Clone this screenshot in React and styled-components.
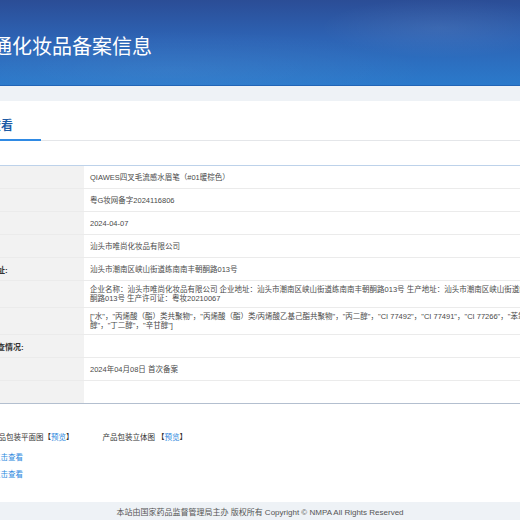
import React from 'react';
import styled, { createGlobalStyle } from 'styled-components';

const Global = createGlobalStyle`
  html, body {
    margin: 0;
    padding: 0;
    overflow: hidden;
  }
  body {
    font-family: "Liberation Sans", "Noto Sans CJK SC", sans-serif;
    background: #eef2f6;
  }
  * {
    box-sizing: border-box;
  }
`;

const Viewport = styled.div`
  width: 520px;
  height: 520px;
  overflow: hidden;
  display: flex;
  flex-direction: column;
  background: #eef2f6;
`;

const Banner = styled.header`
  height: 86px;
  flex-shrink: 0;
  border-bottom: 1px solid #2265b6;
  background:
    radial-gradient(ellipse 120px 30px at 440px 28px, rgba(255, 255, 255, 0.07), transparent),
    radial-gradient(ellipse 260px 40px at 170px 70px, rgba(255, 255, 255, 0.05), transparent),
    linear-gradient(180deg, #2b4d96 0%, #2d63b4 45%, #2b7acb 100%);
  overflow: hidden;
`;

const Title = styled.h1`
  margin: 0 0 0 -28px;
  padding-top: 33px;
  font-family: "Noto Sans CJK SC", sans-serif;
  font-size: 20px;
  line-height: 26px;
  font-weight: 400;
  color: #fff;
  white-space: nowrap;
`;

const Strip = styled.div`
  height: 15px;
  flex-shrink: 0;
`;

const Card = styled.main`
  background: #fff;
  height: 401px;
  flex-shrink: 0;
  overflow: hidden;
`;

const Inner = styled.div`
  margin-left: -40px;
  width: 900px;
`;

const TabBar = styled.div`
  padding-top: 17px;
  border-bottom: 1px solid #e4e6e9;
  display: flex;
`;

const Tab = styled.div`
  margin-left: 5px;
  padding: 0 28px 7px 0;
  border-bottom: 2px solid #2f8ae4;
  font-family: "Noto Sans CJK SC", sans-serif;
  font-size: 12px;
  line-height: 14px;
  font-weight: 700;
  color: #1d5ca6;
  margin-bottom: -1px;
`;

const Table = styled.div`
  margin-top: 24px;
  border-top: 1px solid #bdd2ea;
  border-bottom: 1px solid #b3bfcf;
`;

const Row = styled.div`
  display: grid;
  grid-template-columns: 124px 1fr;
  border-bottom: 1px solid #ebebeb;
  &:last-child {
    border-bottom: none;
  }
`;

const Label = styled.div`
  background: #f2f2f2;
  padding-left: 5px;
  display: flex;
  align-items: center;
  font-size: 8px;
  font-weight: 700;
  color: #333;
  white-space: nowrap;
`;

const Value = styled.div`
  height: ${(p) => (p.$tall ? 26 : 22)}px;
  padding-left: 6px;
  display: flex;
  flex-direction: column;
  justify-content: center;
  font-size: 7.5px;
  line-height: 9px;
  color: #4a4a4a;
`;

const Line = styled.span`
  white-space: nowrap;
`;

const PackRow = styled.div`
  margin-top: 29px;
  padding-left: 31px;
  display: flex;
  gap: 29px;
  font-size: 7.5px;
  line-height: 10px;
  color: #333;
`;

const PackItem = styled.span`
  white-space: nowrap;
`;

const Link = styled.a`
  color: #2d88de;
  text-decoration: none;
`;

const LinkRow = styled.div`
  margin-top: ${(p) => p.$gap}px;
  padding-left: 33px;
  font-size: 7.5px;
  line-height: 10px;
`;

const Footer = styled.footer`
  flex: 1;
  display: flex;
  align-items: center;
  justify-content: center;
  font-size: 8px;
  color: #555;
  white-space: nowrap;
`;

const rows = [
  { label: '产品名称:', lines: ['QIAWES四叉毛流感水眉笔（#01暖棕色）'] },
  { label: '备案编号:', lines: ['粤G妆网备字2024116806'] },
  { label: '备案日期:', lines: ['2024-04-07'] },
  { label: '备案人:', lines: ['汕头市唯尚化妆品有限公司'] },
  { label: '备案人地址:', lines: ['汕头市潮南区峡山街道练南南丰朝酮路013号'] },
  {
    label: '生产企业:',
    tall: true,
    lines: [
      '企业名称：汕头市唯尚化妆品有限公司 企业地址：汕头市潮南区峡山街道练南南丰朝酮路013号 生产地址：汕头市潮南区峡山街道练南南丰朝',
      '酮路013号 生产许可证：粤妆20210067',
    ],
  },
  {
    label: '成分:',
    tall: true,
    lines: [
      '["水"，"丙烯酸（酯）类共聚物"，"丙烯酸（酯）类/丙烯酸乙基己酯共聚物"，"丙二醇"，"CI 77492"，"CI 77491"，"CI 77266"，"苯氧乙',
      '醇"，"丁二醇"，"辛甘醇"]',
    ],
  },
  { label: '上市后检查情况:', lines: [] },
  { label: '备案变更:', lines: ['2024年04月08日 首次备案'] },
  { label: '备注:', lines: [] },
];

const App = () => (
  <Viewport>
    <Global />
    <Banner>
      <Title>普通化妆品备案信息</Title>
    </Banner>
    <Strip />
    <Card>
      <Inner>
        <TabBar>
          <Tab>信息查看</Tab>
        </TabBar>
        <Table>
          {rows.map((r) => (
            <Row key={r.label}>
              <Label>{r.label}</Label>
              <Value $tall={r.tall}>
                {r.lines.map((l) => (
                  <Line key={l}>{l}</Line>
                ))}
              </Value>
            </Row>
          ))}
        </Table>
        <PackRow>
          <PackItem>
            产品包装平面图【<Link>预览</Link>】
          </PackItem>
          <PackItem>
            产品包装立体图 【<Link>预览</Link>】
          </PackItem>
        </PackRow>
        <LinkRow $gap={10}>
          <Link>点击查看</Link>
        </LinkRow>
        <LinkRow $gap={7}>
          <Link>点击查看</Link>
        </LinkRow>
      </Inner>
    </Card>
    <Footer>本站由国家药品监督管理局主办 版权所有 Copyright © NMPA All Rights Reserved</Footer>
  </Viewport>
);

export default App;
